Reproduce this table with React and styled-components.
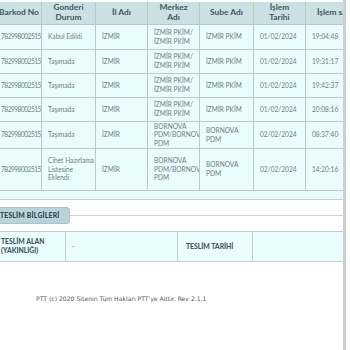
import React from "react";
import styled, { createGlobalStyle } from "styled-components";

const Global = createGlobalStyle`
  html, body { margin: 0; padding: 0; background: #ffffff; }
  body { overflow: hidden; }
`;

const Page = styled.div`
  width: 350px;
  height: 350px;
  overflow: hidden;
  display: flex;
  background: #fff;
`;

const Panel = styled.div`
  flex: none;
  width: 343px;
  height: 350px;
  overflow: hidden;
  border-right: 3px solid #cfcfcf;
  display: flex;
  flex-direction: column;
`;

const Shift = styled.div`
  margin-left: -4px;
  width: 380px;
  display: flex;
  flex-direction: column;
`;

const TableBox = styled.div`
  margin-top: 2px;
  background: #e9fbfc;
  border-bottom: 1px solid #c6cfd1;
  padding-bottom: 8px;
`;

const Table = styled.table`
  border-collapse: collapse;
  table-layout: fixed;
  width: 370px;
  font-family: Lato, "Open Sans", sans-serif;
`;

const HeadCell = styled.th`
  background: #cbe0e3;
  color: #3b5860;
  font-size: 8.4px;
  font-weight: 700;
  line-height: 9.5px;
  text-align: center;
  padding: ${(p) => (p.$nowrap ? "0" : "0 5px")};
  white-space: ${(p) => (p.$nowrap ? "nowrap" : "normal")};
  overflow: hidden;
  border: 1px solid #b9c8cb;
  border-top: none;
  height: 22px;
  box-sizing: border-box;
`;

const Row = styled.tr`
  height: ${(p) => p.$h}px;
`;

const Cell = styled.td`
  background: #eafcfd;
  color: #6e7f84;
  font-size: 6.6px;
  line-height: 8.6px;
  padding: ${(p) => (p.$tight ? "0 0 0 4px" : "0 1px 0 6px")};
  letter-spacing: ${(p) => (p.$tight ? "-0.5px" : "0")};
  border: 1px solid #bcc8ca;
  vertical-align: middle;
  overflow: hidden;
  white-space: ${(p) => (p.$tight ? "nowrap" : "normal")};
  text-align: left;
`;

const TabRow = styled.div`
  display: flex;
  align-items: center;
  margin-top: 7px;
  height: 17px;
`;

const Tab = styled.div`
  flex: none;
  background: #b9d3d8;
  color: #2f4850;
  font-family: Lato, "Open Sans", sans-serif;
  font-weight: 900;
  font-size: 6.8px;
  letter-spacing: 0.2px;
  white-space: nowrap;
  height: 17px;
  display: flex;
  align-items: center;
  padding: 0 9px 0 4px;
  box-sizing: border-box;
  border-radius: 0 4px 4px 0;
  border: 1px solid #a9c2c7;
  border-left: none;
`;

const Rule = styled.div`
  flex: 1;
  height: 1px;
  background: #cfcfcf;
`;

const InfoTable = styled.table`
  margin-top: 7px;
  border-collapse: collapse;
  table-layout: fixed;
  width: 380px;
  font-family: Lato, "Open Sans", sans-serif;
`;

const InfoLabel = styled.td`
  background: #eafcfd;
  color: #3e5a62;
  font-weight: 900;
  font-size: 6.8px;
  line-height: 9px;
  padding: 0 4px 0 ${(p) => (p.$pad ? 8 : 4)}px;
  border: 1px solid #c8cdcf;
  vertical-align: middle;
  height: 30px;
  box-sizing: border-box;
  text-align: left;
`;

const InfoValue = styled.td`
  background: #eafcfd;
  color: #6e7f84;
  font-size: 6.6px;
  padding: 0 6px;
  border: 1px solid #c8cdcf;
  vertical-align: middle;
`;

const Footer = styled.div`
  margin-top: 33px;
  padding-left: 40px;
  font-family: "DejaVu Sans", Verdana, sans-serif;
  font-size: 6.1px;
  line-height: 8px;
  color: #555;
  white-space: nowrap;
`;

const rows = [
  { h: 25, durum: "Kabul Edildi", il: "İZMİR", merkez: "İZMİR PKİM/ İZMİR PKİM", sube: "İZMİR PKİM", tarih: "01/02/2024", saat: "19:04:48" },
  { h: 24, durum: "Taşımada", il: "İZMİR", merkez: "İZMİR PKİM/ İZMİR PKİM", sube: "İZMİR PKİM", tarih: "01/02/2024", saat: "19:31:17" },
  { h: 24, durum: "Taşımada", il: "İZMİR", merkez: "İZMİR PKİM/ İZMİR PKİM", sube: "İZMİR PKİM", tarih: "01/02/2024", saat: "19:42:37" },
  { h: 24, durum: "Taşımada", il: "İZMİR", merkez: "İZMİR PKİM/ İZMİR PKİM", sube: "İZMİR PKİM", tarih: "01/02/2024", saat: "20:08:16" },
  { h: 27, durum: "Taşımada", il: "İZMİR", merkez: "BORNOVA PDM/BORNOVA PDM", sube: "BORNOVA PDM", tarih: "02/02/2024", saat: "08:37:40" },
  { h: 42, durum: "Cihet Hazırlama Listesine Eklendi", il: "İZMİR", merkez: "BORNOVA PDM/BORNOVA PDM", sube: "BORNOVA PDM", tarih: "02/02/2024", saat: "14:20:16" },
];

export default function App() {
  return (
    <Page>
      <Global />
      <Panel>
        <Shift>
          <TableBox>
            <Table>
              <colgroup>
                <col style={{ width: 45 }} />
                <col style={{ width: 54 }} />
                <col style={{ width: 52 }} />
                <col style={{ width: 52 }} />
                <col style={{ width: 54 }} />
                <col style={{ width: 52 }} />
                <col style={{ width: 62 }} />
              </colgroup>
              <thead>
                <tr>
                  <HeadCell $nowrap>Barkod No</HeadCell>
                  <HeadCell>Gonderi Durum</HeadCell>
                  <HeadCell>İl Adı</HeadCell>
                  <HeadCell>Merkez Adı</HeadCell>
                  <HeadCell>Sube Adı</HeadCell>
                  <HeadCell>İşlem Tarihi</HeadCell>
                  <HeadCell>İşlem saati</HeadCell>
                </tr>
              </thead>
              <tbody>
                {rows.map((r, i) => (
                  <Row key={i} $h={r.h}>
                    <Cell $tight>782998002515</Cell>
                    <Cell>{r.durum}</Cell>
                    <Cell>{r.il}</Cell>
                    <Cell>{r.merkez}</Cell>
                    <Cell>{r.sube}</Cell>
                    <Cell>{r.tarih}</Cell>
                    <Cell>{r.saat}</Cell>
                  </Row>
                ))}
              </tbody>
            </Table>
          </TableBox>
          <TabRow>
            <Tab>TESLİM BİLGİLERİ</Tab>
            <Rule />
          </TabRow>
          <InfoTable>
            <colgroup>
              <col style={{ width: 69 }} />
              <col style={{ width: 112 }} />
              <col style={{ width: 75 }} />
              <col style={{ width: 124 }} />
            </colgroup>
            <tbody>
              <tr>
                <InfoLabel>TESLİM ALAN (YAKINLIĞI)</InfoLabel>
                <InfoValue>-</InfoValue>
                <InfoLabel $pad>TESLİM TARİHİ</InfoLabel>
                <InfoValue />
              </tr>
            </tbody>
          </InfoTable>
          <Footer>PTT (c) 2020 Sitenin Tüm Hakları PTT'ye Aittir. Rev 2.1.1</Footer>
        </Shift>
      </Panel>
    </Page>
  );
}
